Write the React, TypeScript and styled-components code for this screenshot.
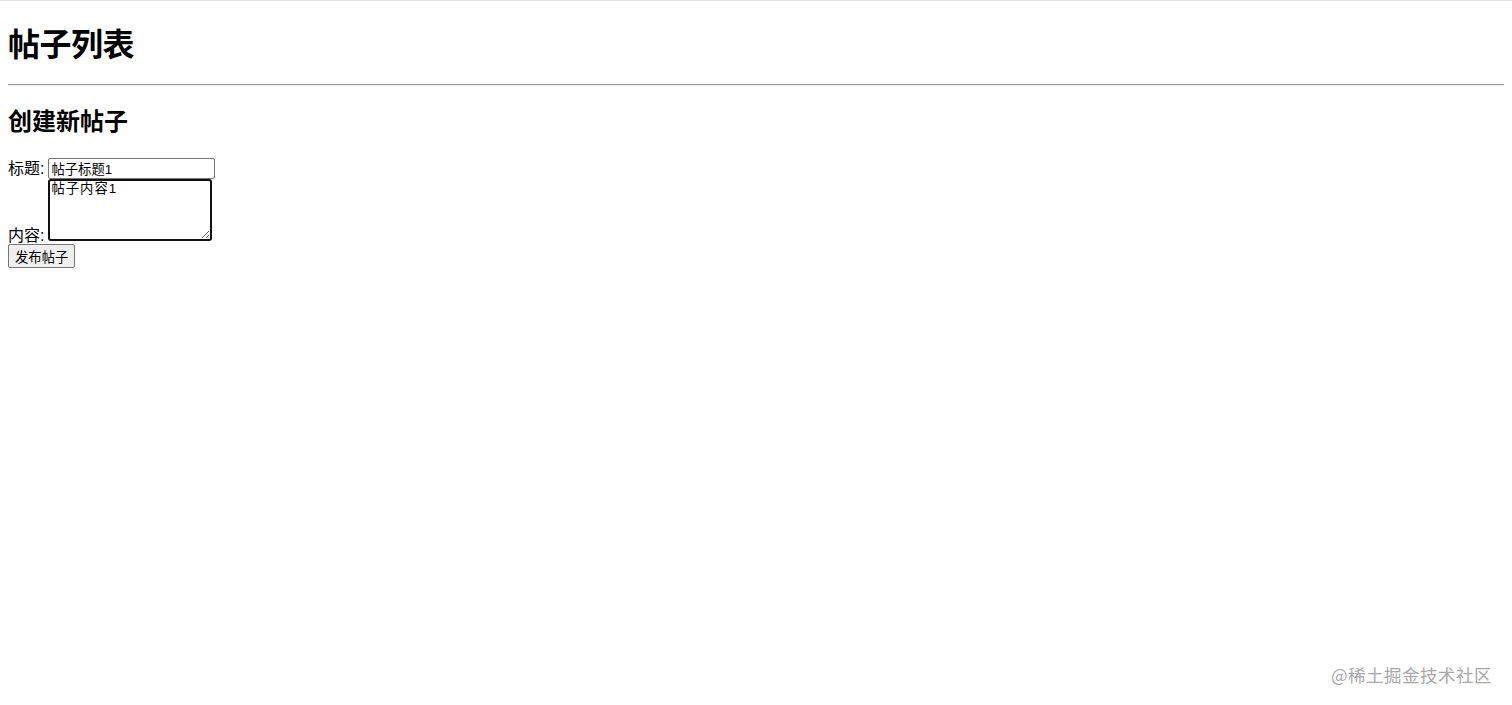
import React from "react";
import styled, { createGlobalStyle } from "styled-components";

const GlobalStyle = createGlobalStyle`
  html, body { margin: 0; padding: 0; background: #fff; }
  body {
    border-top: 1px solid #e3e3e3;
    font-family: "Liberation Sans", "Noto Sans CJK SC", sans-serif;
    color: #000;
  }
`;

const Page = styled.div`
  padding: 0 8px;
  min-height: 704px;
  box-sizing: border-box;
  position: relative;
`;

const Title = styled.h1`
  font-size: 32px;
  font-weight: 700;
  margin: 0;
  padding: 23px 0 0;
  line-height: 42px;
  letter-spacing: -0.5px;
`;

const Rule = styled.hr`
  margin: 18px 0 0;
  border: none;
  border-top: 1px solid #9a9a9a;
  border-bottom: 1px solid #eeeeee;
`;

const SubTitle = styled.h2`
  font-size: 24px;
  font-weight: 700;
  margin: 20px 0 0;
  line-height: 32px;
`;

const Form = styled.form`
  margin-top: 20px;
  font-size: 16px;
`;

const Field = styled.div`
  line-height: 17px;
`;

const Label = styled.label`
  font-size: 16px;
`;

const TextInput = styled.input`
  font-family: "Liberation Sans", "Noto Sans CJK SC", sans-serif;
  font-size: 13.33px;
  width: 167px;
  height: 21px;
  box-sizing: border-box;
  border: 1px solid #767676;
  border-radius: 2px;
  padding: 1px 2px;
  margin: 0 0 0 4px;
  vertical-align: baseline;
`;

const TextArea = styled.textarea`
  font-family: "Liberation Sans", "Noto Sans CJK SC", sans-serif;
  font-size: 13.33px;
  line-height: 16px;
  letter-spacing: 1px;
  width: 164px;
  height: 62px;
  box-sizing: border-box;
  border: 2px solid #101010;
  border-radius: 3px;
  padding: 0 1px;
  margin: 0 0 0 4px;
  vertical-align: baseline;
  outline: none;
  resize: both;
`;

const SubmitButton = styled.button`
  font-family: "Liberation Sans", "Noto Sans CJK SC", sans-serif;
  font-size: 13.33px;
  height: 24px;
  padding: 1px 6px;
  margin-top: 0;
  background: #efefef;
  border: 1px solid #767676;
  border-radius: 2px;
  color: #000;
`;

const Watermark = styled.div`
  position: absolute;
  right: 20px;
  bottom: 18px;
  font-family: "Noto Sans CJK SC", sans-serif;
  font-size: 17.5px;
  color: #a8a8a8;
  letter-spacing: 0.5px;
`;

export default function App() {
  return (
    <>
      <GlobalStyle />
      <Page>
        <Title>帖子列表</Title>
        <Rule />
        <SubTitle>创建新帖子</SubTitle>
        <Form onSubmit={(e) => e.preventDefault()}>
          <Field>
            <Label>标题:</Label>
            <TextInput defaultValue="帖子标题1" />
          </Field>
          <Field>
            <Label>内容:</Label>
            <TextArea defaultValue="帖子内容1" />
          </Field>
          <SubmitButton type="submit">发布帖子</SubmitButton>
        </Form>
        <Watermark>@稀土掘金技术社区</Watermark>
      </Page>
    </>
  );
}
